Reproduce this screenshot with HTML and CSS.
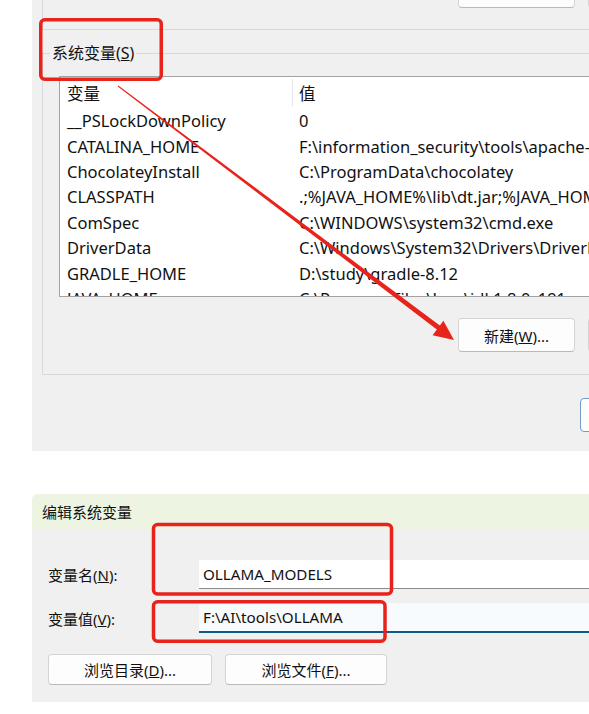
FILE: index.html
```html
<!DOCTYPE html>
<html lang="zh-CN">
<head>
<meta charset="utf-8">
<title>环境变量</title>
<link rel="stylesheet" href="styles.css">
</head>
<body>
<div class="page">
  <section class="env-panel">
    <div class="user-tail">
      <div class="btn-row tail-buttons">
        <button class="btn" aria-label="新建"></button>
        <button class="btn" aria-label="编辑"></button>
      </div>
    </div>
    <fieldset class="sys-group">
      <legend>系统变量(<u>S</u>)</legend>
      <div class="listbox">
        <div class="lv-row lv-head"><div class="c1">变量</div><div class="c2">值</div></div>
        <div class="lv-row"><div class="c1">__PSLockDownPolicy</div><div class="c2">0</div></div>
        <div class="lv-row"><div class="c1">CATALINA_HOME</div><div class="c2">F:\information_security\tools\apache-tomcat</div></div>
        <div class="lv-row"><div class="c1">ChocolateyInstall</div><div class="c2">C:\ProgramData\chocolatey</div></div>
        <div class="lv-row"><div class="c1">CLASSPATH</div><div class="c2">.;%JAVA_HOME%\lib\dt.jar;%JAVA_HOME%\lib</div></div>
        <div class="lv-row"><div class="c1">ComSpec</div><div class="c2">C:\WINDOWS\system32\cmd.exe</div></div>
        <div class="lv-row"><div class="c1">DriverData</div><div class="c2">C:\Windows\System32\Drivers\DriverData</div></div>
        <div class="lv-row"><div class="c1">GRADLE_HOME</div><div class="c2">D:\study\gradle-8.12</div></div>
        <div class="lv-row"><div class="c1">JAVA_HOME</div><div class="c2">C:\Program Files\Java\jdk1.8.0_191</div></div>
      </div>
      <div class="btn-row group-buttons">
        <button class="btn">新建(<u>W</u>)...</button>
        <button class="btn" aria-label="编辑"></button>
      </div>
    </fieldset>
    <div class="btn-row dialog-actions">
      <button class="btn btn-default" aria-label="确定"></button>
    </div>
  </section>

  <section class="edit-dialog">
    <div class="titlebar">编辑系统变量</div>
    <div class="form">
      <div class="field">
        <span class="field-label">变量名(<u>N</u>):</span>
        <div class="input">OLLAMA_MODELS</div>
      </div>
      <div class="field">
        <span class="field-label">变量值(<u>V</u>):</span>
        <div class="input input-focused">F:\AI\tools\OLLAMA</div>
      </div>
      <div class="btn-row form-buttons">
        <button class="btn btn-wide">浏览目录(<u>D</u>)...</button>
        <button class="btn btn-wide2">浏览文件(<u>F</u>)...</button>
      </div>
    </div>
  </section>

  <svg class="annotations" width="589" height="714" viewBox="0 0 589 714" aria-hidden="true">
    <rect x="40.75" y="19.75" width="120.5" height="59.5" rx="4" ry="4" fill="none" stroke="#e8231b" stroke-width="3.5"/>
    <rect x="153.5" y="524.5" width="238" height="69.5" rx="4" ry="4" fill="none" stroke="#e8231b" stroke-width="3.5"/>
    <rect x="153.5" y="601.75" width="231.5" height="39.5" rx="4" ry="4" fill="none" stroke="#e8231b" stroke-width="3.5"/>
    <polygon points="118.3,85.6 117.7,86.4 437.5,330.0 440.5,326.0" fill="#e8231b"/>
    <polygon points="454,340 432.6,335.2 443.4,320.8" fill="#e8231b"/>
  </svg>
</div>
</body>
</html>
```

FILE: styles.css
```css
* {
  box-sizing: border-box;
}

html,
body {
  margin: 0;
  padding: 0;
}

body {
  width: 589px;
  height: 714px;
  overflow: hidden;
  background: #ffffff;
  font-family: "Noto Sans", "Noto Sans CJK SC", sans-serif;
  color: #111111;
}

.page {
  position: relative;
  width: 589px;
  height: 714px;
  overflow: hidden;
}

/* ---------- upper window: environment variables ---------- */
.env-panel {
  display: flow-root;
  margin-left: 32px;
  height: 451px;
  background: #f0f0f0;
  padding-left: 10px;
  overflow: hidden;
}

.user-tail {
  display: flow-root;
  height: 30px;
  border-left: 1px solid #d9d9d9;
  border-bottom: 1px solid #d9d9d9;
}

.btn-row {
  display: flex;
  gap: 13px;
}

.tail-buttons {
  padding-left: 415px;
  margin-top: -26px;
}

.btn {
  flex: none;
  width: 117px;
  height: 34px;
  padding: 0;
  background: #fdfdfd;
  border: 1px solid #d4d4d4;
  border-bottom-color: #b9b9b9;
  border-radius: 4px;
  font-family: "Noto Sans", "Noto Sans CJK SC", sans-serif;
  font-size: 15px;
  color: #111111;
}

.sys-group {
  margin: 13px 0 0 0;
  padding: 0 0 22px 0;
  width: 580px;
  min-width: 0;
  border: 1px solid #d9d9d9;
  border-right: none;
}

.sys-group legend {
  margin-left: 7px;
  padding: 0 2px;
  font-size: 16px;
  line-height: 20px;
  color: #111111;
}

.listbox {
  margin: 13px 0 0 16px;
  width: 560px;
  height: 221px;
  background: #ffffff;
  border: 1px solid #a3a3a3;
  overflow: hidden;
  font-size: 16.5px;
}

.lv-row {
  display: grid;
  grid-template-columns: 233px 1fr;
  height: 25.4px;
  align-items: center;
  white-space: nowrap;
}

.lv-head {
  height: 31px;
}

.lv-head .c1 {
  height: 27px;
  display: flex;
  align-items: center;
  border-right: 1px solid #e6e6e6;
}

.c1 {
  padding-left: 7px;
  overflow: hidden;
}

.c2 {
  padding-left: 6px;
  overflow: hidden;
}

.group-buttons {
  margin-top: 21px;
  padding-left: 415px;
}

.dialog-actions {
  margin-top: 23px;
  padding-left: 538px;
}

.btn-default {
  border: 1px solid #6f9cc9;
}

/* ---------- lower window: edit system variable ---------- */
.edit-dialog {
  margin: 43px 0 0 32px;
  height: 208px;
  background: #f0f0f0;
  border-top-left-radius: 6px;
  overflow: hidden;
}

.titlebar {
  height: 36px;
  padding-left: 10px;
  background: #edf5e2;
  font-size: 15px;
  line-height: 36px;
  color: #111111;
}

.form {
  padding: 30px 0 0 16px;
}

.field {
  display: flex;
  align-items: center;
}

.field + .field {
  margin-top: 14px;
}

.field-label {
  flex: none;
  width: 151px;
  font-size: 15px;
  color: #111111;
}

.input {
  flex: none;
  width: 420px;
  height: 29px;
  padding-left: 4px;
  background: #ffffff;
  border-bottom: 1px solid #8c8c8c;
  font-size: 15.2px;
  line-height: 28px;
  white-space: nowrap;
  color: #111111;
}

.input-focused {
  height: 30px;
  background: #f8fbfd;
  border-bottom: 2px solid #0b5a87;
}

.form-buttons {
  margin-top: 21px;
}

.btn-wide {
  width: 164px;
  height: 31px;
}

.btn-wide2 {
  width: 162px;
  height: 31px;
}

/* ---------- annotation overlay ---------- */
.annotations {
  position: absolute;
  top: 0;
  left: 0;
  pointer-events: none;
}
```
